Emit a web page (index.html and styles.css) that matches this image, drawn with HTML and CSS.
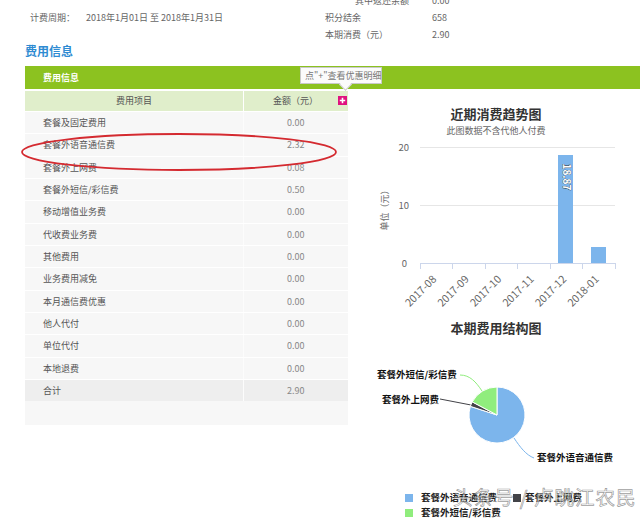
FILE: index.html
```html
<!DOCTYPE html>
<html lang="zh-CN">
<head>
<meta charset="utf-8">
<title>费用信息</title>
<link rel="stylesheet" href="styles.css">
</head>
<body>
<div class="page">
  <div class="summary">
    <span></span><span></span><span class="indent">其中返还余额</span><span>0.00</span>
    <span>计费周期：</span><span>2018年1月01日 至 2018年1月31日</span><span>积分结余</span><span>658</span>
    <span></span><span></span><span>本期消费（元）</span><span>2.90</span>
  </div>
  <h2 class="section-title">费用信息</h2>
  <div class="bar">费用信息
    <div class="tip">点"+"查看优惠明细</div>
  </div>
  <div class="content">
    <div class="fee-panel">
      <div class="fee-head">
        <div class="head-name">费用项目</div>
        <div class="head-amt">金额（元）<span class="plus"><svg width="9" height="9" viewBox="0 0 9 9"><path d="M4.5 1.8v5.4M1.8 4.5h5.4" stroke="#fff" stroke-width="1.6"/></svg></span></div>
      </div>
      <div class="fee-row"><div class="name">套餐及固定费用</div><div class="amt">0.00</div></div>
      <div class="fee-row"><div class="name">套餐外语音通信费</div><div class="amt">2.32</div></div>
      <div class="fee-row"><div class="name">套餐外上网费</div><div class="amt">0.08</div></div>
      <div class="fee-row"><div class="name">套餐外短信/彩信费</div><div class="amt">0.50</div></div>
      <div class="fee-row"><div class="name">移动增值业务费</div><div class="amt">0.00</div></div>
      <div class="fee-row"><div class="name">代收费业务费</div><div class="amt">0.00</div></div>
      <div class="fee-row"><div class="name">其他费用</div><div class="amt">0.00</div></div>
      <div class="fee-row"><div class="name">业务费用减免</div><div class="amt">0.00</div></div>
      <div class="fee-row"><div class="name">本月通信费优惠</div><div class="amt">0.00</div></div>
      <div class="fee-row"><div class="name">他人代付</div><div class="amt">0.00</div></div>
      <div class="fee-row"><div class="name">单位代付</div><div class="amt">0.00</div></div>
      <div class="fee-row"><div class="name">本地退费</div><div class="amt">0.00</div></div>
      <div class="fee-row total"><div class="name">合计</div><div class="amt">2.90</div></div>
      <svg class="mark" width="324" height="44" viewBox="0 0 324 44"><ellipse cx="159" cy="20" rx="157" ry="18" fill="none" stroke="#d42a30" stroke-width="1.8"/></svg>
    </div>
    <div class="charts">
      <div class="chart-title first">近期消费趋势图</div>
      <div class="chart-sub">此图数据不含代他人付费</div>
      <svg class="trend" width="292" height="180" viewBox="0 0 292 180">
        <g stroke="#e6e6e6" stroke-width="1">
          <path d="M72 10.5H267M72 68.5H267"/>
        </g>
        <g font-size="9.5" fill="#666" text-anchor="end">
          <text x="61" y="14">20</text>
          <text x="61" y="72">10</text>
          <text x="59" y="130">0</text>
        </g>
        <text x="40" y="71" font-size="9" fill="#666" text-anchor="middle" transform="rotate(-90 40 71)">单位（元）</text>
        <rect x="210" y="18" width="15" height="108" fill="#7cb5ec"/>
        <rect x="243" y="110" width="15" height="16" fill="#7cb5ec"/>
        <text x="218" y="40" font-size="10" font-weight="bold" fill="#fff" stroke="#333" stroke-width="0.6" paint-order="stroke" text-anchor="middle" transform="rotate(90 218 40) translate(0 3.5)">18.87</text>
        <path d="M72 126.5H267" stroke="#ccd6eb" stroke-width="1"/>
        <g stroke="#ccd6eb" stroke-width="1">
          <path d="M72.5 126v6M104.5 126v6M137.5 126v6M169.5 126v6M202.5 126v6M234.5 126v6M267.5 126v6"/>
        </g>
        <g font-size="10.5" fill="#666" text-anchor="end">
          <text x="89" y="143" transform="rotate(-45 89 143)">2017-08</text>
          <text x="121.5" y="143" transform="rotate(-45 121.5 143)">2017-09</text>
          <text x="154" y="143" transform="rotate(-45 154 143)">2017-10</text>
          <text x="186.5" y="143" transform="rotate(-45 186.5 143)">2017-11</text>
          <text x="219" y="143" transform="rotate(-45 219 143)">2017-12</text>
          <text x="251.5" y="143" transform="rotate(-45 251.5 143)">2018-01</text>
        </g>
      </svg>
      <div class="chart-title">本期费用结构图</div>
      <svg class="pie" width="292" height="130" viewBox="0 0 292 130">
        <path d="M112 38C122 38 128 45 134 54" fill="none" stroke="#90ed7d" stroke-width="1"/>
        <path d="M92 62L123 68" fill="none" stroke="#434348" stroke-width="1"/>
        <path d="M166 101C172 110 178 118 186 121" fill="none" stroke="#7cb5ec" stroke-width="1"/>
        <g stroke="#fff" stroke-width="1" stroke-linejoin="round">
          <path d="M149 78L149 50A28 28 0 1 1 122.37 69.35Z" fill="#7cb5ec"/>
          <path d="M149 78L122.37 69.35A28 28 0 0 1 124.26 64.88Z" fill="#434348"/>
          <path d="M149 78L124.26 64.88A28 28 0 0 1 149 50Z" fill="#90ed7d"/>
        </g>
        <g font-size="9.5" font-weight="bold" fill="#111">
          <text x="29" y="41">套餐外短信/彩信费</text>
          <text x="34" y="66">套餐外上网费</text>
          <text x="189" y="124">套餐外语音通信费</text>
        </g>
      </svg>
      <div class="legend">
        <div class="legend-item"><span class="swatch blue"></span>套餐外语音通信费</div>
        <div class="legend-item"><span class="swatch dark"></span>套餐外上网费</div>
        <div class="legend-item"><span class="swatch green"></span>套餐外短信/彩信费</div>
      </div>
    </div>
  </div>
  <div class="watermark">头条号 / 卢眺江农民</div>
</div>
</body>
</html>
```
FILE: styles.css
```css
* { box-sizing: border-box; }
html, body { margin: 0; padding: 0; }
body {
  font-family: "Noto Sans CJK SC", "Noto Sans", sans-serif;
  font-size: 9px;
  color: #555;
  background: #fff;
}
.page {
  position: relative;
  width: 640px;
  height: 520px;
  overflow: hidden;
}
.summary {
  display: grid;
  grid-template-columns: 56px 239px 107px auto;
  grid-auto-rows: 17px;
  line-height: 17px;
  margin-top: -8px;
  padding-left: 30px;
  color: #666;
}
.summary .indent { padding-left: 30px; }
.section-title {
  margin: 0;
  padding-left: 25px;
  font-size: 12px;
  line-height: 16px;
  font-weight: bold;
  color: #2f8bd2;
}
.bar {
  position: relative;
  margin: 7px 0 0 25px;
  height: 23px;
  line-height: 23px;
  padding-left: 18px;
  background: #8cc220;
  color: #fff;
  font-weight: bold;
}
.tip {
  position: absolute;
  left: 275px;
  top: 1px;
  width: 82px;
  height: 17px;
  line-height: 15px;
  padding-left: 4px;
  background: #fbfbfb;
  border: 1px solid #c9c9c9;
  color: #777;
  font-weight: normal;
  white-space: nowrap;
}
.tip::after {
  content: "";
  position: absolute;
  left: 40px;
  bottom: -6px;
  width: 8px;
  height: 8px;
  background: #fbfbfb;
  border-right: 1px solid #c9c9c9;
  border-bottom: 1px solid #c9c9c9;
  transform: rotate(45deg);
}
.content {
  display: flex;
  align-items: flex-start;
  margin: 2px 0 0 25px;
}
.fee-panel {
  position: relative;
  width: 323px;
  background: #f7f7f7;
  padding-bottom: 24px;
}
.fee-head {
  display: grid;
  grid-template-columns: 218px 105px;
  height: 20px;
  line-height: 20px;
  background: #e0eecb;
  color: #555;
}
.head-name { text-align: center; }
.head-amt {
  display: flex;
  align-items: center;
  padding-left: 29px;
  padding-right: 1px;
  border-left: 1px solid #fff;
}
.plus {
  display: flex;
  margin-left: auto;
  margin-top: -2px;
  width: 9px;
  height: 9px;
  background: #e0127f;
}
.fee-row {
  display: grid;
  grid-template-columns: 218px 105px;
  height: 22.33px;
  line-height: 21.33px;
  border-top: 1px solid #fff;
}
.fee-row .name { padding-left: 18px; color: #555; }
.fee-row .amt { padding-left: 43px; color: #888; border-left: 1px solid #fcfcfc; }
.fee-row.total { background: #eeeeee; }
.mark {
  position: absolute;
  left: -5px;
  top: 41px;
}
.charts {
  width: 292px;
}
.chart-title {
  padding-left: 4px;
  margin-top: 2px;
  font-size: 13px;
  line-height: 18px;
  font-weight: bold;
  color: #333;
  text-align: center;
}
.chart-title.first { margin-top: 14px; }
.chart-sub {
  padding-left: 4px;
  margin-top: 2px;
  line-height: 12px;
  color: #666;
  text-align: center;
}
.trend, .pie { display: block; }
.legend {
  display: grid;
  grid-template-columns: 108px auto;
  grid-auto-rows: 15px;
  padding: 23px 0 0 57px;
  font-size: 9.5px;
  font-weight: bold;
  color: #222;
}
.legend-item {
  display: flex;
  align-items: center;
  line-height: 15px;
  white-space: nowrap;
}
.swatch {
  width: 8px;
  height: 8px;
  margin-right: 8px;
}
.swatch.blue { background: #7cb5ec; }
.swatch.dark { background: #434348; margin-right: 4px; }
.swatch.green { background: #90ed7d; }
.watermark {
  position: absolute;
  left: 453px;
  top: 484px;
  font-size: 19.5px;
  line-height: 26px;
  letter-spacing: 1px;
  color: rgba(255, 255, 255, 0.55);
  -webkit-text-stroke: 0.7px rgba(120, 120, 120, 0.75);
  white-space: nowrap;
  pointer-events: none;
}
```
